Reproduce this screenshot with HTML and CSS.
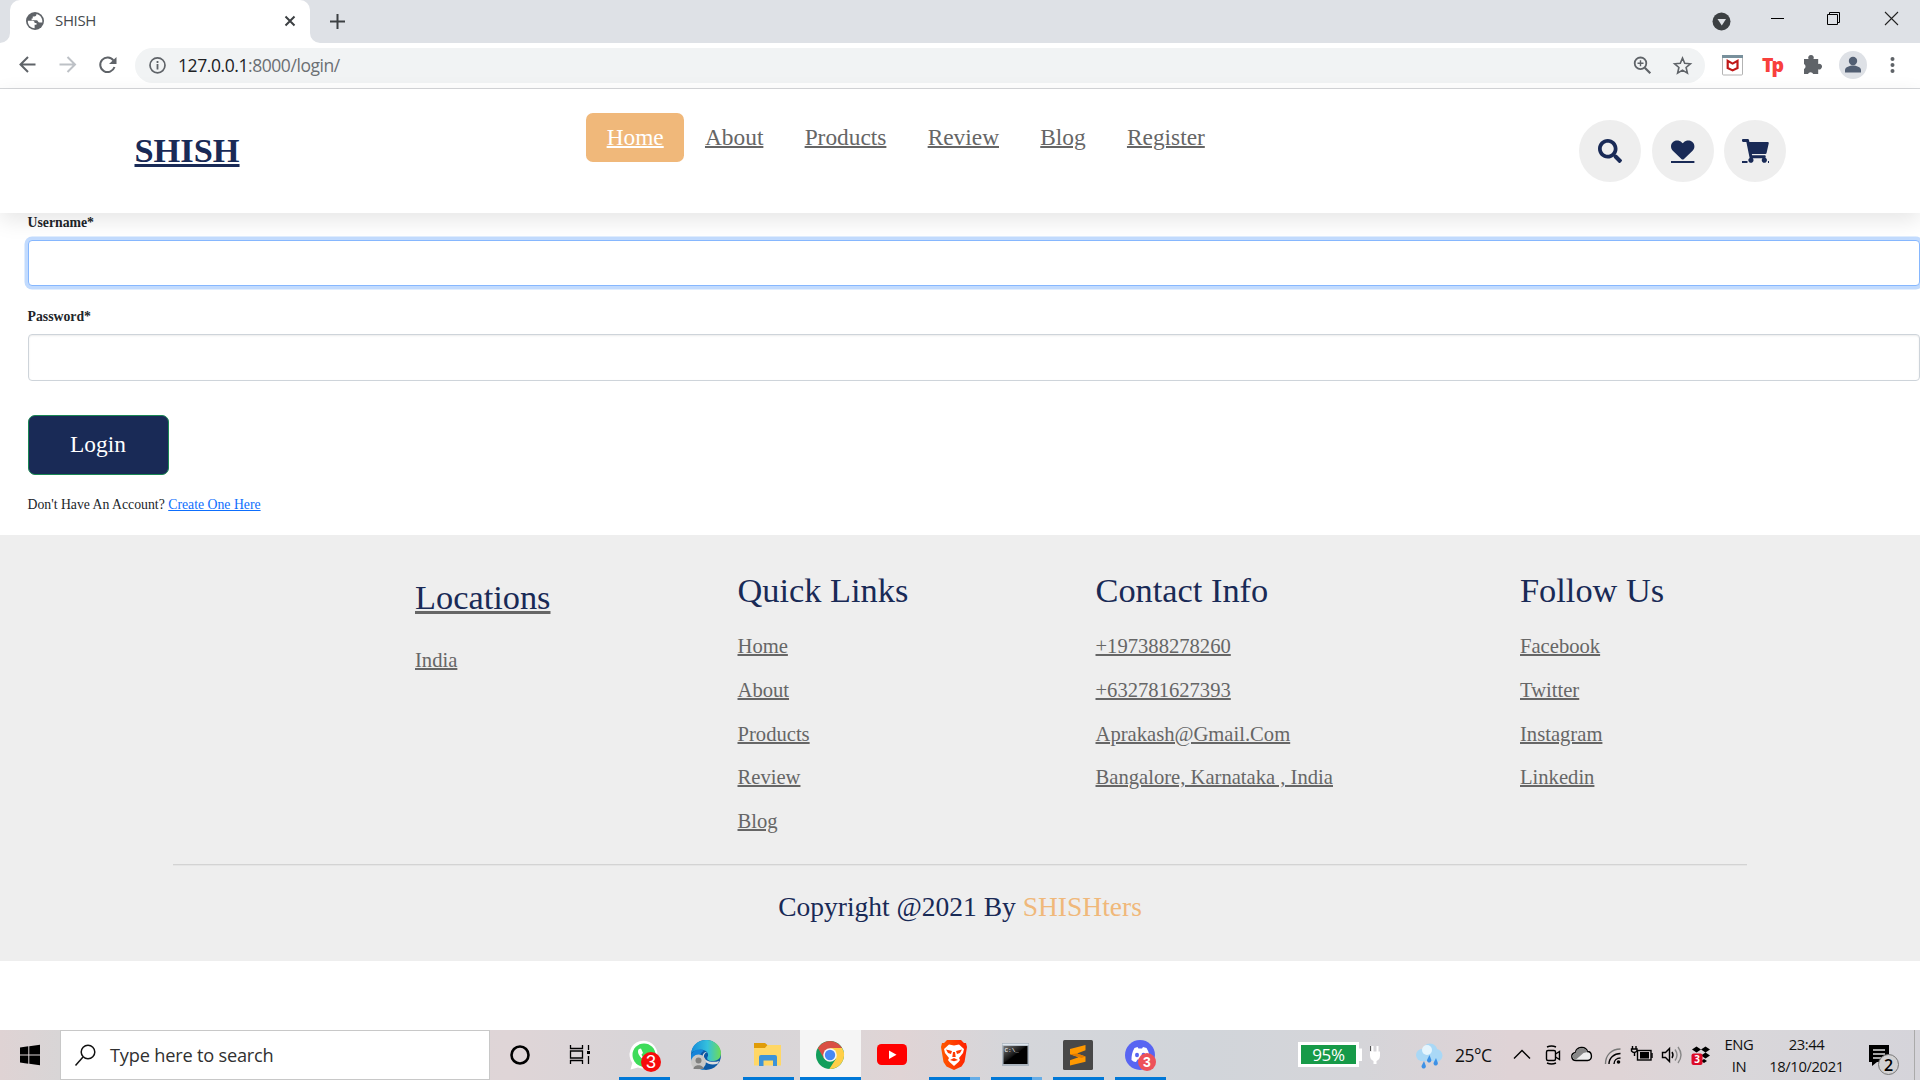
FILE: index.html
```html
<!DOCTYPE html>
<html lang="en">
<head>
<meta charset="utf-8">
<title>SHISH</title>
<link rel="stylesheet" href="styles.css">
</head>
<body>
<div class="tabstrip">
  <svg class="flare" width="10" height="43"><path d="M10 33v10H0a10 10 0 0 0 10-10z" fill="#fff"/></svg>
  <div class="tab">
    <svg width="18" height="18" viewBox="0 0 24 24"><circle cx="12" cy="12" r="12" fill="#5f6368"/><path d="M2.500 11.500h6c2 0 3 1 3 3h2.500v2.500h-2.500v4.500C6 21 2 17 2.500 11.500zM14 2.700c0 2-1 3.300-3 3.300H9v2.500H7.500v2.500H14c2 0 2 3 4 3h3.700c.8-5-2.200-10-7.700-11.300z" fill="#fff"/></svg>
    <span class="tab-title">SHISH</span>
    <svg class="tab-close" width="12" height="12"><path d="M1.500 1.500l9 9M10.500 1.500l-9 9" stroke="#3c4043" stroke-width="2"/></svg>
  </div>
  <svg class="flare" width="10" height="43"><path d="M0 33v10h10A10 10 0 0 1 0 33z" fill="#fff"/></svg>
  <svg class="newtab" width="15" height="15"><path d="M7.500 0v15M0 7.500h15" stroke="#3c4043" stroke-width="2"/></svg>
  <svg class="window-controls" width="220" height="43"><circle cx="21.500" cy="21.500" r="9" fill="#3c4043"/><path d="M17.500 19h8.500l-4.200 6.500z" fill="#dee1e6"/><path d="M71 18.500h13" stroke="#000"/><path d="M127.500 14.500h10v10h-10zM129.500 14.500v-2h10v10h-2" fill="none" stroke="#000"/><path d="M185 12l13 13M198 12l-13 13" stroke="#222" stroke-width="1.100"/></svg>
</div>
<div class="toolbar">
  <svg width="135" height="45" fill="none" stroke="#5f6368" stroke-width="2"><path d="M35.500 21.500H21M28 14l-7.500 7.500L28 29"/><path d="M59.500 21.500H74M67.500 14l7.500 7.500-7.500 7.500" stroke="#bdc1c6"/><path d="M113.500 17.500a7.300 7.300 0 1 0 1 6.500"/><path d="M116.500 14v7H109z" fill="#5f6368" stroke="none"/></svg>
  <div class="omnibox">
    <svg width="43" height="35"><circle cx="22.500" cy="17.300" r="7.500" fill="none" stroke="#5f6368" stroke-width="1.700"/><path d="M22.500 16v5.500M22.500 13v2" stroke="#5f6368" stroke-width="1.800"/></svg>
    <span class="url"><b>127.0.0.1</b>:8000/login/</span>
    <svg class="omni-actions" width="75" height="35" fill="none" stroke="#5f6368"><circle cx="15.500" cy="15.300" r="5.800" stroke-width="1.800"/><path d="M19.800 19.800l5.500 5.500" stroke-width="2.200"/><path d="M12.500 15.300h6M15.500 12.300v6" stroke-width="1.400"/><path d="M57.500 10l2.200 5.300 5.700.5-4.300 3.700 1.300 5.600-4.900-3-4.900 3 1.300-5.600-4.300-3.700 5.700-.5z" stroke-width="1.600"/></svg>
  </div>
  <svg width="50" height="45"><rect x="17.500" y="12.500" width="20" height="19.500" rx="1" fill="#fff" stroke="#b3b3b3"/><path d="M17 12h21v3H17z" fill="#78909c"/><path d="M22.700 17.800v7.200l4.900 2.400 4.900-2.400v-7.200l-4.900 2.800z" fill="none" stroke="#c01818" stroke-width="2.200"/></svg>
  <span class="tp">Tp</span>
  <svg width="123" height="45"><path d="M12 16h4.500a2.800 2.800 0 1 1 5 0h4.700v5a2.800 2.800 0 1 1 0 5.200v4.800h-5a2.800 2.800 0 0 0-5.200 0h-4v-5a2.800 2.800 0 0 0 0-5z" fill="#5f6368"/><circle cx="61" cy="22" r="14" fill="#dee1e6"/><circle cx="61" cy="18" r="4.200" fill="#525f73"/><path d="M53 29.500v-2.500c0-3 5-4.500 8-4.500s8 1.500 8 4.500v2.500z" fill="#525f73"/><g fill="#5f6368"><circle cx="100.500" cy="16" r="2"/><circle cx="100.500" cy="22" r="2"/><circle cx="100.500" cy="28" r="2"/></g></svg>
</div>

<div class="page">
  <header class="header">
    <a class="logo">SHISH</a>
    <nav class="nav"><a class="active">Home</a><a>About</a><a>Products</a><a>Review</a><a>Blog</a><a>Register</a></nav>
    <div class="icons">
      <a><svg width="24" height="24" viewBox="0 0 512 512"><path fill="#192a56" d="M505 442.700L405.300 343c-4.500-4.500-10.600-7-17-7H372c27.600-35.300 44-79.700 44-128C416 93.100 322.900 0 208 0S0 93.100 0 208s93.100 208 208 208c48.300 0 92.700-16.400 128-44v16.300c0 6.400 2.500 12.500 7 17l99.700 99.700c9.400 9.400 24.600 9.400 33.900 0l28.300-28.300c9.400-9.400 9.400-24.600.1-34zM208 336c-70.700 0-128-57.200-128-128 0-70.700 57.200-128 128-128 70.700 0 128 57.200 128 128 0 70.700-57.200 128-128 128z"/></svg></a>
      <a><svg width="24" height="24" viewBox="0 0 24 24"><g transform="translate(0 .2) scale(.0457 .0425)"><path fill="#192a56" d="M462.300 62.600C407.500 15.900 326 24.300 275.700 76.200L256 96.500l-19.700-20.300C186.100 24.300 104.500 15.900 49.700 62.600c-62.800 53.600-66.100 149.800-9.900 207.900l193.500 199.800c12.500 12.900 32.800 12.900 45.300 0l193.500-199.800c56.300-58.100 53-154.300-9.800-207.900z"/></g><path d="M0 22h23.400v2H0z" fill="#192a56"/></svg></a>
      <a><svg width="27" height="24" viewBox="0 0 27 24"><path fill="#192a56" transform="scale(.0465)" d="M528.100 301.300l47.300-208C578.800 78.300 567.400 64 552 64H159.200l-9.200-44.800C147.800 8 137.900 0 126.500 0H24C10.700 0 0 10.700 0 24v16c0 13.300 10.700 24 24 24h69.900l70.200 343.400C147.300 417.100 136 435.200 136 456c0 30.900 25.100 56 56 56s56-25.100 56-56c0-15.700-6.400-29.800-16.800-40h209.600C430.400 426.200 424 440.300 424 456c0 30.900 25.100 56 56 56s56-25.100 56-56c0-22.200-12.900-41.300-31.600-50.400l5.500-24.300c3.400-15-8-29.300-23.400-29.300H218.100l-6.500-32h293.100c11.200 0 20.900-7.800 23.400-18.700z"/><path d="M0 22h5.500v2H0zM26 22h1v2h-1z" fill="#192a56"/></svg></a>
    </div>
  </header>
  <main class="form">
    <label>Username*</label>
    <div class="input focus"></div>
    <label>Password*</label>
    <div class="input"></div>
    <div class="button">Login</div>
    <p>Don't Have An Account? <a>Create One Here</a></p>
  </main>
  <footer class="footer">
    <div class="columns">
      <div class="col locations"><a class="title">Locations</a><a>India</a></div>
      <div class="col quick"><h3>Quick Links</h3><a>Home</a><a>About</a><a>Products</a><a>Review</a><a>Blog</a></div>
      <div class="col contact"><h3>Contact Info</h3><a>+197388278260</a><a>+632781627393</a><a>Aprakash@Gmail.Com</a><a>Bangalore, Karnataka , India</a></div>
      <div class="col follow"><h3>Follow Us</h3><a>Facebook</a><a>Twitter</a><a>Instagram</a><a>Linkedin</a></div>
    </div>
    <div class="credit">Copyright @2021 By <span>SHISHters</span></div>
  </footer>
</div>

<div class="taskbar">
  <svg width="60" height="50"><path d="M20 17.500l8.300-1.200v8.200H20zM29.300 16.200L40 14.700v9.800H29.300zM20 25.500h8.300v8.200L20 32.500zM29.300 25.500H40v9.800l-10.700-1.500z"/></svg>
  <div class="search"><svg width="49" height="48" fill="none" stroke="#111" stroke-width="1.500"><circle cx="27" cy="21" r="6.800"/><path d="M22 26l-7.500 8.500"/></svg><span>Type here to search</span></div>
  <svg width="60" height="50"><circle cx="30" cy="25" r="8.500" fill="none" stroke="#000" stroke-width="2.600"/></svg>
  <svg width="64" height="50"><g fill="none" stroke="#000" stroke-width="1.300"><path d="M20.500 15v3.500h12V15M20.500 34v-3.500h12V34M20.500 21h12v7h-12zM38.500 15v5M38.500 26v8"/></g><path d="M37 21h3v3h-3z"/></svg>
  <div class="app running"><svg viewBox="0 0 62 50"><path d="M16.500 39.500l1.800-6.500A14 14 0 1 1 24 37.500z" fill="#fff"/><circle cx="30" cy="25" r="11.500" fill="#3edc5a"/><path d="M25 19c-2 2-1 6 3 9.500s7 4 9 1.500l-3.500-2.500-2 1.500c-2-1-3.500-2.500-4-4.500l1.500-1.500L27 18.500z" fill="#fff"/><circle cx="37" cy="32" r="10" fill="#f70b0b"/><text x="37" y="38" class="badge">3</text></svg></div>
  <div class="app"><svg viewBox="0 0 62 50"><defs><linearGradient id="edge-top"><stop stop-color="#168cda"/><stop offset=".55" stop-color="#35c1dd"/><stop offset="1" stop-color="#6fdc55"/></linearGradient></defs><circle cx="30" cy="25" r="15" fill="#0c59a4"/><path d="M15.200 23C16 15 22.500 10 30 10c9 0 15 6.500 15 13s-5 8-9 8-6-2-4-5c1-4-4-7-9-6-4 .5-7 2-7.800 3z" fill="url(#edge-top)"/><path d="M15 25c2-5 9-7 13-4-3 1-5 5-4 10 0 4 2 8 5 9-9 0-14.500-7-14-15z" fill="#1684d9"/><path d="M31 22c-4 2-4 6-1 8s9 2.500 13 1l-1 2.500c-5 2-10 1-13-2-3 0-4-4-2-7 1-2 2-2.500 4-2.500z" fill="#dcdde0"/><circle cx="22.500" cy="32" r="7.500" fill="#c9c8c7"/><circle cx="22.500" cy="30.500" r="3" fill="#80807f"/><path d="M17.500 39c0-5 10-5 10 0z" fill="#80807f"/></svg></div>
  <div class="app running"><svg viewBox="0 0 62 50"><path d="M16 13h11l3 2.500-3 3H16z" fill="#e09c08"/><path d="M16 18h11l2.500-3H43v20.500H16z" fill="#ffd766"/><path d="M21 36V27q0-2 2-2h14q2 0 2 2v9h-4v-5.500H25.500V36z" fill="#3d93d8"/></svg></div>
  <div class="app current"><svg viewBox="0 0 62 50"><circle cx="30" cy="25" r="14" fill="#129e5b"/><path d="M30 25L17.900 18A14 14 0 0 1 42.100 18z" fill="#d94f43"/><path d="M30 18h12.100A14 14 0 0 1 29.300 39l6.800-10.500z" fill="#ffcf48"/><path d="M17.900 18l6.100 10.500L30 18z" fill="#d94f43"/><circle cx="30" cy="25" r="6.800" fill="#f5f5f5"/><circle cx="30" cy="25" r="5.200" fill="#4688f4"/></svg></div>
  <div class="app"><svg viewBox="0 0 62 50"><rect x="15" y="14" width="30" height="21" rx="4.500" fill="#f00"/><path d="M27 20.500v8.500l7.500-4.250z" fill="#fff"/></svg></div>
  <div class="app running stacked"><svg viewBox="0 0 62 50"><defs><linearGradient id="lion"><stop stop-color="#ff5a00"/><stop offset="1" stop-color="#ff2000"/></linearGradient></defs><path d="M23 10h14l3 3 2 0 1 4-.5 3-2 12-3 4.500L30 40l-7.500-3.500-3-4.500-2-12-.5-3 1-4h2z" fill="url(#lion)"/><path d="M25 14.500l5 1 5-1 5 4.500-1 4-4 5 1 2-1.500 2-4.500 4-4.500-4-1.500-2 1-2-4-5-1-4z" fill="#fff"/><path d="M22 19.500l6 1.500-1 3-3-1zM38 19.500l-6 1.500 1 3 3-1zM26 30l4-2 4 2-4 1.200zM29 22h2l.7 5h-3.400z" fill="#ff3a00"/></svg></div>
  <div class="app running stacked"><svg viewBox="0 0 62 50"><defs><linearGradient id="glass" x2="1" y2="1"><stop stop-color="#777"/><stop offset=".45" stop-color="#151515"/><stop offset=".5" stop-color="#000"/></linearGradient></defs><rect x="16" y="13" width="27" height="23" fill="#aab4be"/><path d="M16.500 14.500h26" stroke="#dfe7ee" stroke-width="1.500"/><rect x="17.500" y="16" width="24" height="18" fill="url(#glass)"/><text x="18.500" y="21.500" class="prompt">C:\_</text></svg></div>
  <div class="app running"><svg viewBox="0 0 62 50"><rect x="15" y="10" width="30" height="30" rx="1.500" fill="#484848"/><path d="M37.500 15v5.200l-8.500 3.300 8.500 3v5.200L22 35.500v-5.200l8.500-3-8.500-3v-5.200z" fill="#ff9800"/><path d="M22 24.300l7-.8 8.500 3-4 1.500z" fill="#e27b00"/></svg></div>
  <div class="app running"><svg viewBox="0 0 62 50"><circle cx="30" cy="25" r="15" fill="#5865f2"/><path d="M24.500 18l3-1 1 1.500h3.500l1-1.500 3.500 1c2.500 4 3.500 8 3 12-2 1.500-3 2-4.500 2l-1.500-2.500h-6L26 32c-2 0-3-1-4.500-2 0-4 .5-8 3-12z" fill="#fff"/><ellipse cx="27" cy="25" rx="2" ry="2.300" fill="#5865f2"/><ellipse cx="33.500" cy="25" rx="2" ry="2.300" fill="#5865f2"/><circle cx="37" cy="32" r="9" fill="#ed5259"/><text x="37" y="37" class="badge bold">3</text></svg></div>
  <div class="tray">
    <div class="charge">95%</div>
    <svg width="96" height="50"><path d="M0 18.500h3V31H0z" fill="#fff"/><path d="M11 21.500h10v4q0 4-3.500 5.500V34h-3v-3q-3.500-1.500-3.500-5.500zM12.500 16h2v6h-2zM17.500 16h2v6h-2z" fill="#fff"/><path d="M11.500 16v5" stroke="#555"/><g fill="#a9d8f6"><circle cx="63" cy="25" r="6"/><circle cx="71" cy="21" r="7.500"/><circle cx="77" cy="25.500" r="6.500"/><path d="M61 23h18v8H61z"/></g><circle cx="68" cy="20" r="5" fill="#e5f5fd"/><g fill="#3d91e6"><path d="M65 31l1.500 4a2.200 2.200 0 1 1-4 1zM70.500 25l1.500 4a2.200 2.200 0 1 1-4 1zM77 28l1.500 4a2.200 2.200 0 1 1-4 1z"/></g></svg>
    <span class="temp">25°C</span>
    <svg width="218" height="50" fill="none" stroke="#000" stroke-width="1.400"><path d="M14 28.500l8-8 8 8"/><rect x="46.500" y="20.500" width="9" height="10" rx="1.500"/><path d="M55.500 24l4-2.500v8l-4-2.500M47 17q4.500-2 9 0M47 33q4.500 2 9 0"/><path d="M76 30.500c-5 0-6-7-.5-8 1-6 10-7 12-1 5 0 5.500 9 0 9z" fill="#eee"/><path d="M76 30c-4-1-5-6-.5-7 1-6 10-7 12-1l-4 1-8 7z" fill="#888" stroke="none"/><path d="M105.500 34c0-9 6-15 15-15" stroke="#777"/><path d="M109 34c0-6 5-10.500 11.500-10.500M114 34c0-3.500 2.500-6 6.500-6"/><circle cx="118.500" cy="32" r="1.800" fill="#000" stroke="none"/><rect x="137.500" y="20.500" width="13.500" height="9.500"/><path d="M140 22h9v6.500h-9z" fill="#000" stroke="none"/><path d="M152 23v5M132.500 16v3M136 16v3M131.500 19h5.500v2q-3 3-5.500 0zM134.500 23v3"/><path d="M162.500 22.500h3l4-4v13l-4-4h-3zM172 22q2 3 0 6"/><path d="M175 19.500q4 5.500 0 11M178 17q6 8 0 16" stroke="#888"/><path d="M192 19.500l4.500-3 4.500 3-4.500 3zM201 19.500l4.500-3 4.500 3-4.500 3zM201 25.500l4.500-3 4.500 3-4.500 3zM201 31l3-2 3 2-3 2z" fill="#000" stroke="none"/><rect x="191.500" y="23.500" width="11" height="11.500" rx="2" fill="#dc0a28" stroke="none"/><text x="197" y="33" class="dot-badge">3</text></svg>
    <div class="stack lang"><span>ENG</span><span>IN</span></div>
    <div class="stack clock"><span>23:44</span><span>18/10/2021</span></div>
    <svg width="56" height="50"><path d="M5 15h20v17H13l-5 4v-4H5z"/><path d="M9 20h12M9 24h12M9 28h8" stroke="#ddd" stroke-width="1.300"/><circle cx="24.500" cy="34.500" r="10" fill="#d2d1d2" stroke="#777"/><text x="24.500" y="40.500" class="count">2</text><path d="M50.500 0v50" stroke="#aaa"/></svg>
  </div>
</div>
</body>
</html>
```
FILE: styles.css
```css
* { box-sizing: border-box; }
html { font-size: 13.75px; }
body { margin: 0; width: 1920px; height: 1080px; overflow: hidden; display: flex; flex-direction: column; background: #fff; font-family: "Liberation Serif", serif; color: #212529; }
svg { display: block; flex: none; }

.tabstrip { height: 43px; flex: none; background: #dee1e6; display: flex; align-items: flex-start; font-family: "Open Sans", sans-serif; }
.tab { width: 300px; height: 43px; background: #fff; border-radius: 10px 10px 0 0; display: flex; align-items: center; padding: 0 14px 1px 16px; }
.tab-title { margin: -2px 0 0 11px; font-size: 15px; letter-spacing: -.35px; color: #45494d; }
.tab-close { margin-left: auto; }
.newtab { margin: 14px 0 0 10px; }
.window-controls { margin-left: auto; }
.toolbar { height: 46px; flex: none; display: flex; align-items: flex-start; border-bottom: 1px solid #d5d7da; font-family: "Open Sans", sans-serif; }
.omnibox { width: 1570px; height: 35px; margin-top: 5px; background: #f1f3f4; border-radius: 18px; display: flex; align-items: center; }
.url { margin-top: -1px; font-size: 17.5px; letter-spacing: -.43px; color: #6b6f73; }
.url b { font-weight: 400; color: #202124; }
.omni-actions { margin-left: auto; margin-right: 5px; }
.tp { width: 37px; padding-left: 7px; font: 800 19.5px/43px "Open Sans", sans-serif; letter-spacing: -2px; color: #f8403c; }

.page { flex: 1; min-height: 0; }
.header { position: relative; height: 124px; padding: 0 134px; background: #fff; box-shadow: 0 .5rem 1.5rem rgba(0,0,0,.1); display: flex; align-items: flex-start; justify-content: space-between; }
.logo { width: 452px; padding: 41px 0 0 .5px; font-size: 2.5rem; font-weight: 700; line-height: 41px; color: #192a56; text-decoration: underline; text-decoration-thickness: 3px; text-underline-offset: 2px; }
.nav { display: flex; flex: 1; margin-top: 24px; }
.nav a { height: 49px; padding: 0 1.5rem; font-size: 1.7rem; line-height: 49px; color: #666; text-decoration: underline; text-decoration-thickness: 2px; border-radius: .5rem; }
.nav .active { background: #f0b87a; color: #fff; }
.icons { display: flex; gap: 10.6px; margin-top: 31px; }
.icons a { width: 4.5rem; height: 4.5rem; border-radius: 50%; background: #eee; display: flex; align-items: center; justify-content: center; }

.form { height: 322px; padding-left: 27.5px; font-size: 1rem; }
.form label { display: block; height: 27px; padding-top: 1px; line-height: 18px; font-weight: 700; }
.form .input { height: 47px; margin-bottom: 20px; border: 1px solid #ced4da; border-radius: 4px; background: #fff; box-shadow: inset 0 1px 2px rgba(0,0,0,.08); }
.form .focus { position: relative; height: 46px; margin-bottom: 21px; border-color: #86b7fe; box-shadow: 0 0 0 3.5px rgba(13,110,253,.25); }
.form .button { width: 141px; height: 60px; margin-top: 34px; border: 1px solid #198754; border-radius: 7px; background: #192a56; color: #fff; font-size: 1.7rem; line-height: 57px; text-align: center; }
.form p { margin: 20px 0 0; line-height: 20px; }
.form p a { color: #0d6efd; text-decoration: underline; }

.footer { height: 426px; padding: 0 173px; background: #eee; }
.columns { display: flex; height: 329px; padding: 34px 0 0 242px; }
.col { display: flex; flex-direction: column; align-items: flex-start; }
.locations { width: 322.5px; padding-top: 7px; }
.quick { width: 358px; }
.contact { width: 424.5px; }
.col h3, .col .title { margin: 0 0 13px; font-size: 2.5rem; line-height: 43px; font-weight: 400; color: #192a56; }
.col a { font-size: 1.5rem; line-height: 43.8px; color: #666; text-decoration: underline; text-decoration-thickness: 2px; }
.col .title { margin-bottom: 20px; text-decoration-color: #666; text-decoration-thickness: 3px; }
.credit { border-top: 1px solid #d3d3d3; box-shadow: inset 0 1px #e5e5e5; padding-top: 22px; font-size: 2rem; line-height: 40px; text-align: center; color: #192a56; }
.credit span { color: #f0b87a; }

.taskbar { height: 50px; flex: none; display: flex; background: linear-gradient(90deg, #dfd3d4, #d8d5d6 60px, #dfd5d7 510px, #d7d5d8 660px, #dad6d8 820px, #e0d4d5 900px, #d5d6da 1010px, #d1d5da 1200px, #d5d5d9 1360px, #dfd3d6 1510px, #dfd4d6 1620px, #d9d7da 1740px, #d5d4da 1920px); font-family: "Open Sans", sans-serif; color: #111; }
.search { width: 430px; background: #fff; border: 1px solid #c8c8c8; display: flex; align-items: center; font-size: 18.2px; letter-spacing: -.2px; color: #303030; }
.app { width: 62px; height: 50px; display: flex; flex-direction: column; }
.app svg { width: 62px; height: 50px; margin-bottom: -3px; }
.running::after { content: ""; width: 51px; height: 3px; margin-left: 5px; background: #0078d7; }
.stacked::after { background: linear-gradient(90deg, #0078d7 41px, #66ade6 41px); }
.current { background: linear-gradient(#f5f5f5 47px, #0078d7 47px) no-repeat 0 0 / 61px 50px; }
.badge { font: 18px "Liberation Sans", sans-serif; fill: #fff; text-anchor: middle; }
.bold { font-weight: 700; font-size: 14px; }
.prompt { font: 700 6px "Liberation Mono", monospace; fill: #ddd; }
.tray { margin-left: auto; display: flex; align-items: flex-start; }
.charge { width: 61px; height: 25px; margin-top: 12px; border: 3px solid #fff; background: #169a48; color: #fff; font-size: 17px; line-height: 19px; text-align: center; letter-spacing: -.3px; }
.temp { width: 45px; font-size: 17.5px; line-height: 51px; letter-spacing: -.5px; }
.dot-badge { font: 700 10px "Open Sans", sans-serif; fill: #fff; stroke: none; text-anchor: middle; }
.stack { display: flex; flex-direction: column; align-items: center; font-size: 14.8px; line-height: 22px; padding-top: 3px; letter-spacing: -.4px; }
.lang { width: 42px; }
.clock { width: 95px; padding-right: 2px; margin-right: 9px; }
.count { font: 600 16px "Open Sans", sans-serif; text-anchor: middle; }
```
